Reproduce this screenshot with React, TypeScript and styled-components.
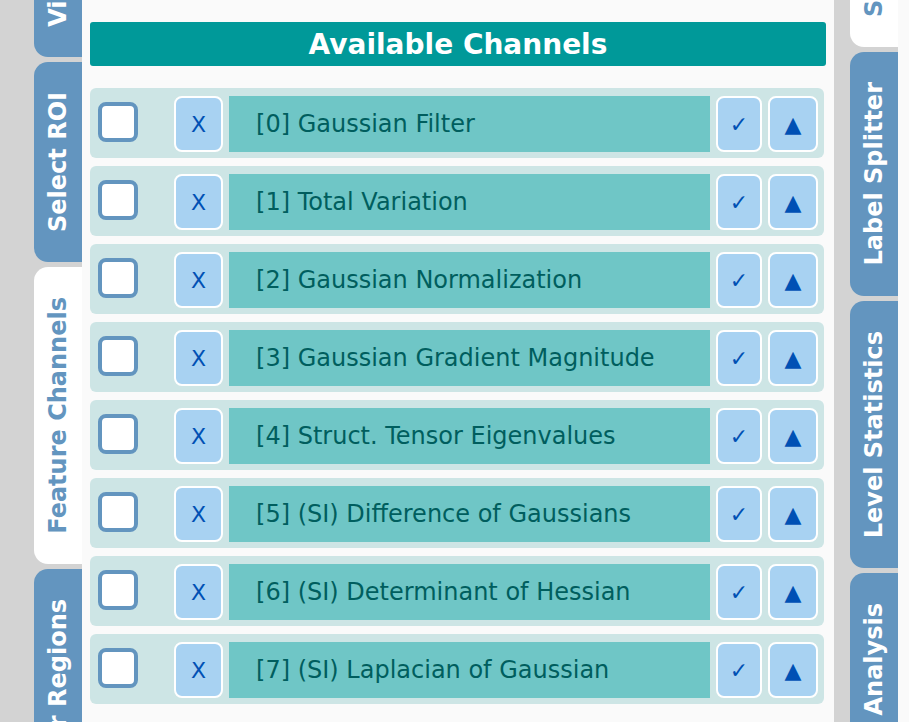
import { useLayoutEffect, useRef } from "react";
import styled, { createGlobalStyle } from "styled-components";

const GlobalStyle = createGlobalStyle`
  html, body {
    margin: 0;
    padding: 0;
    height: 100%;
    overflow: hidden;
    background: #d3d3d3;
    font-family: "DejaVu Sans", "Noto Sans", sans-serif;
  }
`;

const Page = styled.div`
  display: flex;
  height: 100vh;
  padding-left: 34px;
  box-sizing: border-box;
`;

const TabBar = styled.div`
  position: relative;
  display: flex;
  flex-direction: column;
  gap: 5px;
  width: 48px;
  flex: none;
  height: 100%;
  overflow: hidden;
`;

const Tab = styled.div<{ $active?: boolean }>`
  flex: none;
  display: flex;
  justify-content: center;
  align-items: center;
  padding: 30px 0;
  border-radius: 14px 0 0 14px;
  background: ${(p) => (p.$active ? "#ffffff" : "#6395bf")};
  color: ${(p) => (p.$active ? "#6395bf" : "#ffffff")};
  font-weight: bold;
  font-size: 24px;
  cursor: pointer;
`;

const TabText = styled.span`
  writing-mode: vertical-rl;
  transform: rotate(180deg);
  white-space: nowrap;
  line-height: 48px;
`;

const Panel = styled.div`
  width: 752px;
  flex: none;
  height: 100%;
  box-sizing: border-box;
  background: #fafafa;
  padding: 22px 8px 0 8px;
  overflow: hidden;
`;

const Gutter = styled.div`
  width: 16px;
  flex: none;
`;

const SidePanel = styled.div`
  flex: 1;
  background: #fafafa;
`;

const Header = styled.div`
  height: 44px;
  border-radius: 3px;
  background: #009999;
  color: #ffffff;
  font-weight: bold;
  font-size: 28px;
  display: flex;
  align-items: center;
  justify-content: center;
  margin-bottom: 22px;
`;

const List = styled.div`
  display: flex;
  flex-direction: column;
  gap: 8px;
`;

const Row = styled.div`
  display: flex;
  align-items: flex-start;
  gap: 6px;
  height: 70px;
  box-sizing: border-box;
  margin-right: 2px;
  padding: 8px 6px 0 8px;
  border-radius: 6px;
  background: #cde5e5;
`;

const CheckCell = styled.div`
  width: 70px;
  flex: none;
  padding-top: 6px;
`;

const Checkbox = styled.input`
  display: block;
  appearance: none;
  margin: 0;
  width: 40px;
  height: 40px;
  box-sizing: border-box;
  border: 4px solid #6395bf;
  border-radius: 8px;
  background: #ffffff;
  cursor: pointer;
`;

const Button = styled.button<{ $w: number; $size?: number }>`
  width: ${(p) => p.$w}px;
  height: 56px;
  flex: none;
  box-sizing: border-box;
  padding: 0;
  border: 2px solid #ffffff;
  border-radius: 8px;
  background: #a8d2f2;
  color: #0050b4;
  font-family: "DejaVu Sans", sans-serif;
  font-size: ${(p) => p.$size ?? 22}px;
  display: flex;
  align-items: center;
  justify-content: center;
  cursor: pointer;
`;

const Label = styled.div`
  flex: 1;
  height: 56px;
  display: flex;
  align-items: center;
  padding-left: 27px;
  background: #6fc6c6;
  color: #005e5e;
  font-size: 24px;
  white-space: nowrap;
  overflow: hidden;
`;

const channels = [
  "Gaussian Filter",
  "Total Variation",
  "Gaussian Normalization",
  "Gaussian Gradient Magnitude",
  "Struct. Tensor Eigenvalues",
  "(SI) Difference of Gaussians",
  "(SI) Determinant of Hessian",
  "(SI) Laplacian of Gaussian",
];

type TabDef = { label: string; active?: boolean };

// tab bars are scrolled so that the second tab sits at `anchorTop`
function Tabs({ tabs, anchorTop }: { tabs: TabDef[]; anchorTop: number }) {
  const barRef = useRef<HTMLDivElement>(null);
  useLayoutEffect(() => {
    const bar = barRef.current;
    if (!bar) return;
    const second = bar.children[1] as HTMLElement | undefined;
    if (second) bar.scrollTop = second.offsetTop - anchorTop;
  }, [anchorTop]);
  return (
    <TabBar ref={barRef}>
      {tabs.map((t) => (
        <Tab key={t.label} $active={t.active}>
          <TabText>{t.label}</TabText>
        </Tab>
      ))}
      <div style={{ height: 200, flex: "none" }} />
    </TabBar>
  );
}

const leftTabs: TabDef[] = [
  { label: "Visualization" },
  { label: "Select ROI" },
  { label: "Feature Channels", active: true },
  { label: "Filter Regions" },
];

const rightTabs: TabDef[] = [
  { label: "Segmentation", active: true },
  { label: "Label Splitter" },
  { label: "Level Statistics" },
  { label: "Analysis" },
];

export default function App() {
  return (
    <>
      <GlobalStyle />
      <Page>
        <Tabs tabs={leftTabs} anchorTop={62} />
        <Panel>
          <Header>Available Channels</Header>
          <List>
            {channels.map((name, i) => (
              <Row key={name}>
                <CheckCell>
                  <Checkbox type="checkbox" />
                </CheckCell>
                <Button $w={49}>X</Button>
                <Label>
                  [{i}] {name}
                </Label>
                <Button $w={46} $size={22}>✓</Button>
                <Button $w={50} $size={22}>▲</Button>
              </Row>
            ))}
          </List>
        </Panel>
        <Gutter />
        <Tabs tabs={rightTabs} anchorTop={52} />
        <SidePanel />
      </Page>
    </>
  );
}
